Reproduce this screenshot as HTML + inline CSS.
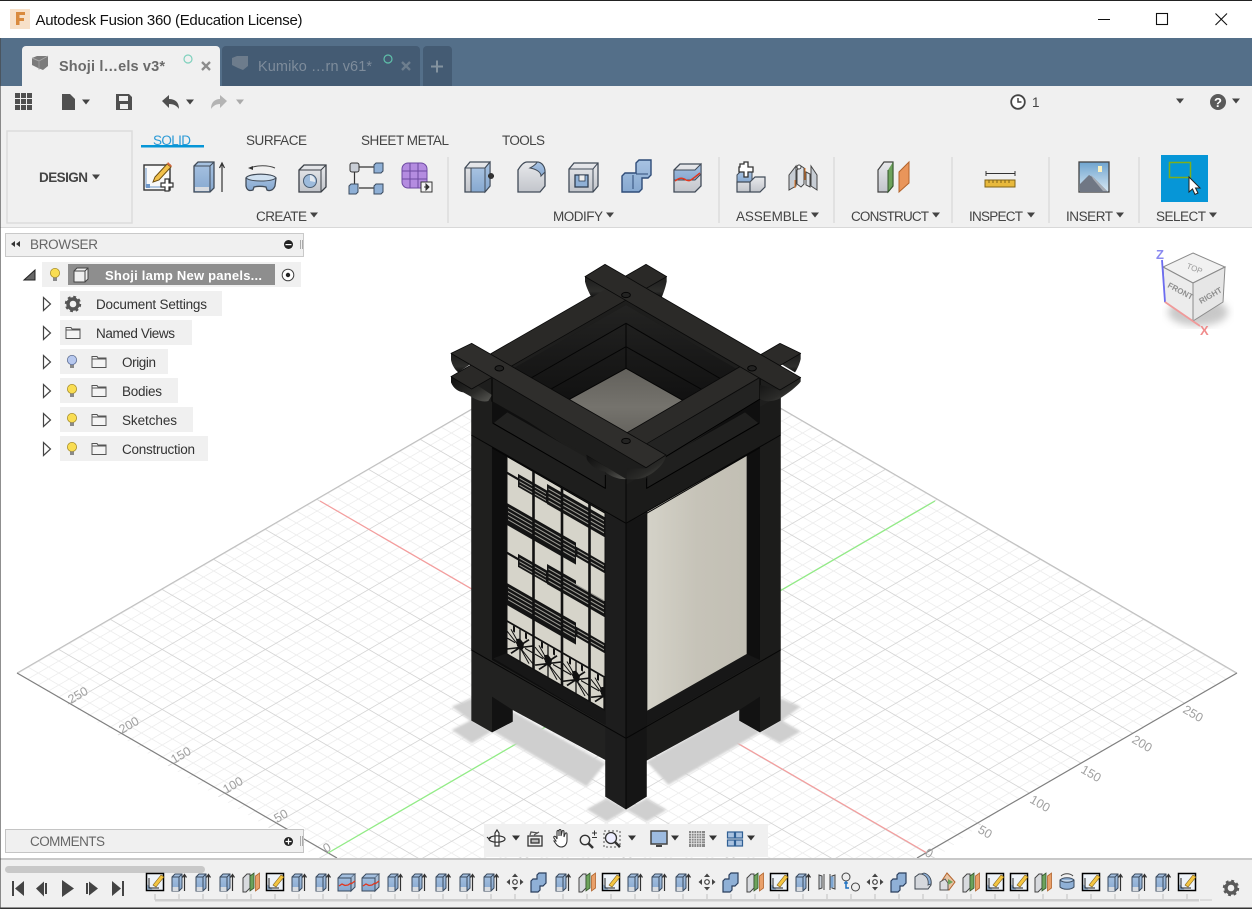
<!DOCTYPE html>
<html><head><meta charset="utf-8"><title>Autodesk Fusion 360</title>
<style>
html,body{margin:0;padding:0;width:1252px;height:909px;overflow:hidden;background:#fff}
svg{display:block;position:absolute;left:0;top:0;overflow:hidden}
text{font-family:"Liberation Sans",Arial,sans-serif}
</style></head><body>
<svg width="1252" height="909" viewBox="0 0 1252 909" xmlns="http://www.w3.org/2000/svg">
<defs>
<pattern id="grid" patternUnits="userSpaceOnUse" width="50" height="50" patternTransform="matrix(1.033,.6,-1.033,.6,627,679)">
<path d="M10 0V50M20 0V50M30 0V50M40 0V50M0 10H50M0 20H50M0 30H50M0 40H50" stroke="#eeeeee" stroke-width=".85" fill="none"/>
<path d="M0 0V50M0 0H50" stroke="#d0d0d0" stroke-width="1.400" fill="none"/>
</pattern>
<linearGradient id="paperR" x1="0" x2="1" y1="0" y2="0"><stop offset="0" stop-color="#d4d2c8"/><stop offset=".5" stop-color="#c6c3b8"/><stop offset="1" stop-color="#c2bfb4"/></linearGradient>
<linearGradient id="floor" x1="0" x2="0" y1="0" y2="1"><stop offset="0" stop-color="#62605b"/><stop offset=".6" stop-color="#75736d"/><stop offset="1" stop-color="#66645f"/></linearGradient>
<linearGradient id="end" x1="0" x2="0" y1="0" y2="1"><stop offset="0" stop-color="#1d1d1c"/><stop offset=".7" stop-color="#2e2e2c"/><stop offset="1" stop-color="#0f0f0f"/></linearGradient>
<linearGradient id="endL" x1="0" x2="1" y1="0" y2="1"><stop offset="0" stop-color="#0f0f0f"/><stop offset=".6" stop-color="#2a2a28"/><stop offset="1" stop-color="#5a5a56"/></linearGradient>
<linearGradient id="wallA" x1="0" x2="0" y1="0" y2="1"><stop offset="0" stop-color="#232322"/><stop offset="1" stop-color="#111"/></linearGradient>
<linearGradient id="blue" x1="0" x2="0" y1="0" y2="1"><stop offset="0" stop-color="#a8c3e2"/><stop offset="1" stop-color="#86a8d0"/></linearGradient>
<linearGradient id="grey" x1="0" x2="0" y1="0" y2="1"><stop offset="0" stop-color="#e8e9ec"/><stop offset="1" stop-color="#c2c5cb"/></linearGradient>
<linearGradient id="sky" x1="0" x2="0" y1="0" y2="1"><stop offset="0" stop-color="#6fa4cf"/><stop offset="1" stop-color="#d8e8f2"/></linearGradient>
<filter id="blur"><feGaussianBlur stdDeviation="4"/></filter>
<filter id="soft" x="-10%" y="-10%" width="120%" height="120%"><feGaussianBlur stdDeviation="4"/></filter>

<g id="tExt"><path d="M-7 -5l3 -3h7v14l-3 3h-7z" fill="url(#blue)" stroke="#3a4a5e"/><path d="M-7 -5h7v14M0 -5l3 -3" stroke="#3a4a5e" fill="none"/><path d="M-6.500 5h6v4h-6z" fill="#d7dbe0"/><path d="M5.500 9V-7M3.500 -4.500l2 -3l2 3" stroke="#333" fill="none" stroke-width="1.200"/></g>
<g id="tSk"><rect x="-8.500" y="-8.500" width="17" height="17" fill="#eef3f8" stroke="#000" stroke-width="1.500"/><path d="M-7.500 7.500v-5l5 5z" fill="#8fb4dc"/><path d="M-6 -4V6H4" stroke="#222" fill="none"/><path d="M-2 3L6 -7l3 2L1 5z" fill="#f4c542" stroke="#7a5a10" stroke-width=".6"/></g>
<g id="tPl"><path d="M-8 -4l4 -4h3v14l-4 4h-3z" fill="#d8dade" stroke="#444"/><path d="M-1 -6l4 -3v15l-4 3z" fill="#6da35c" stroke="#34562c" stroke-width=".8"/><path d="M4.500 -6l4 -3v15l-4 3z" fill="#e9a06a" stroke="#b3642c" stroke-width=".8"/></g>
<g id="tSp"><path d="M-9 -4l4 -4h13l-4 4v13h-13z" fill="url(#blue)" stroke="#3a4a5e"/><path d="M4 -4v13l4 -4V-8" fill="#a9bed6" stroke="#3a4a5e"/><path d="M-9 -4H4" stroke="#3a4a5e"/><path d="M-8 4l3 -2l3 1.500l3 -.5l3 -2" stroke="#e2371f" fill="none" stroke-width="1.300"/><path d="M4 2l4 -3" stroke="#e2371f" fill="none" stroke-width="1.300"/></g>
<g id="tMv"><path d="M0 -8.500l-3 3.500h6zM0 8.500l-3 -3.500h6zM-8.500 0l3.500 -3v6zM8.500 0l-3.500 -3v6z" fill="#444"/><circle r="2.300" fill="#fff" stroke="#444" stroke-width="1.200"/></g>
<g id="tCb"><path d="M-7 -2l2 -2h4v-4l2 -2h7v10l-3 3h-3v4l-2 2h-7z" transform="translate(-1 1)" fill="#8fb0d6" stroke="#2b3f5e" stroke-width="1.200"/></g>
<g id="tFi"><path d="M-8 -5l4 -3h5c5 1 8 5 7 11l-3 4h-13z" fill="#d5d8dd" stroke="#3e4650"/><path d="M-2 -8c5 1 8 5 7 11l3 -1c1 -6 -3 -10 -7 -11z" fill="#8fb0d6" stroke="#3e4650" stroke-width=".8"/></g>
<g id="tDi"><path d="M0 -9l8 9l-6 8l-8 -8z" fill="#e7c3a4" stroke="#b4642c"/><path d="M-7 0l5 -3l3 4v7h-8z" fill="#dcdde0" stroke="#555"/><path d="M1 -3l5 3l-5 3z" fill="#6da35c"/></g>
<g id="tMi"><path d="M-8 -7l3 1v12l-3 1zM8 -7l-3 1v12l3 1z" fill="#c9d0d8" stroke="#444"/><path d="M-3 -8v16M3 -8v16" stroke="#444"/><path d="M3.500 -6l3 1v10l-3 1z" fill="#7ea7d3"/></g>
<g id="tJo"><circle cx="-5" cy="-5" r="4" fill="#eee" stroke="#444"/><circle cx="4.500" cy="5" r="4" fill="#eee" stroke="#444"/><path d="M-5 -1v7h3" stroke="#1b6fc0" fill="none" stroke-width="1.500"/><path d="M-7 1h4" stroke="#1b6fc0" stroke-width="1.300"/></g>
<g id="tRv"><path d="M-7 -2c3 -3 11 -3 14 0v7c-3 3 -11 3 -14 0z" fill="#8fb0d6" stroke="#3a4a5e"/><path d="M-7 -2c3 3 11 3 14 0" fill="#c3d5e9" stroke="#3a4a5e"/><path d="M-6 -6c3 -3 9 -3 12 0" stroke="#444" fill="none"/></g>

<path id="car" d="M-4 -2.500h8l-4 5z"/>
<g id="folder"><path d="M-7 -5.500h5l1 1.500h8v9.500h-14z M-7 -3h14" fill="#f4f4f4" stroke="#555" stroke-width="1"/></g>
<g id="bulb"><circle cy="-2" r="4.600" fill="#f9dd52" stroke="#a68d2a" stroke-width=".8"/><path d="M-2 2.500h4v3.500h-4z" fill="#8a8a8a"/></g>
<g id="arrow"><path d="M-3.500 -6.500v13l7 -6.500z" fill="#fff" stroke="#444" stroke-width="1.200"/></g>
<g id="star" fill="none" stroke="#111" stroke-width="1.300">
<path d="M13 165V197M0 174L26 192M26 174L0 192M4 170L13 181L22 170M4 194L13 183L22 194M0 181H8M18 181H26"/>
<path d="M7 165v6M19 165v6" stroke-width="2"/>
<path d="M9 177l4 -3l4 3l-1 6l-3 3l-3 -3z" fill="#111" stroke="none"/>
</g>
</defs>

<!-- canvas -->
<rect width="1252" height="909" fill="#fff"/>
<polygon points="17,673 627,319 1237,673 1002,809 936,858 318,858" fill="url(#grid)"/>
<path d="M17 673L627 319M627 319L1237 673" stroke="#c0c0c0" stroke-width="1" fill="none"/>
<path d="M17 673L337 858M1237 673L917 858" stroke="#7f7f7f" stroke-width="1.200" fill="none"/>
<path d="M320 501L927 853" stroke="#f59c9c" stroke-width="1.200"/>
<path d="M328 853L935 501" stroke="#92ec86" stroke-width="1.300"/>
<g font-size="12.500" fill="#a0a0a0">
<text transform="translate(71 704) rotate(-30)">250</text>
<text transform="translate(122 734) rotate(-30)">200</text>
<text transform="translate(174 764) rotate(-30)">150</text>
<text transform="translate(226 794) rotate(-30)">100</text>
<text transform="translate(277 823) rotate(-30)">50</text>
<text transform="translate(326 853) rotate(-30)">0</text>
<text transform="translate(1182 712) rotate(30)">250</text>
<text transform="translate(1131 742) rotate(30)">200</text>
<text transform="translate(1080 772) rotate(30)">150</text>
<text transform="translate(1029 802) rotate(30)">100</text>
<text transform="translate(977 832) rotate(30)">50</text>
<text transform="translate(924 855) rotate(30)">0</text>
</g>

<!-- lamp: coordinates = zoom space -->
<g transform="translate(430 255) scale(.33333)" stroke-linejoin="round">
<!-- shadows -->
<g fill="#cfcfcf" filter="url(#soft)">
<polygon points="65,1355 125,1330 190,1365 125,1400"/>
<polygon points="65,1425 125,1395 185,1430 125,1465"/>
<polygon points="250,1370 190,1430 470,1595 526,1525"/>
<polygon points="470,1663 530,1630 588,1663 650,1630 710,1665 650,1700 590,1665 530,1700"/>
<polygon points="1112,1355 1052,1330 990,1365 1052,1400"/>
<polygon points="1112,1430 1052,1395 990,1432 1050,1465"/>
<polygon points="650,1520 925,1365 990,1432 715,1590"/>
</g>
<!-- body -->
<polygon points="124,420 588,690 588,1663 526,1625 526,1515 248,1365 248,1400 186,1432 124,1397" fill="#222221"/>
<polygon points="1052,420 588,690 588,1663 650,1625 650,1517 928,1365 928,1397 990,1432 1052,1397" fill="#1c1c1b"/>
<polygon points="186,1325 248,1365 248,1400 186,1432" fill="#121212"/>
<polygon points="928,1365 990,1325 990,1432 928,1397" fill="#121212"/>
<polygon points="526,1515 526,1625 588,1663 588,1450 526,1410" fill="#1d1d1d"/>
<polygon points="650,1517 650,1625 588,1663 588,1450 650,1410" fill="#151515"/>
<!-- posts -->
<polygon points="526,775 588,805 588,1450 526,1410" fill="#1d1d1d"/>
<polygon points="650,775 588,805 588,1450 650,1410" fill="#151515"/>
<polygon points="124,540 186,578 186,1215 124,1185" fill="#1f1f1e"/>
<polygon points="1052,540 990,578 990,1215 1052,1185" fill="#1c1c1b"/>
<!-- recess left -->
<polygon points="186,578 526,775 526,1410 186,1215" fill="#0e0e0e"/>
<polygon points="190,1210 228,1195 526,1365 526,1410" fill="#171717"/>
<polygon points="650,775 990,578 990,1215 650,1410" fill="#0f0f0f"/>
<polygon points="650,1410 650,1367 950,1197 990,1215" fill="#171717"/>
<polygon points="652,770 950,600 950,1197 652,1367" fill="url(#paperR)"/>
<!-- kumiko panel -->
<g transform="translate(231 606) scale(3) matrix(1,.575,0,1,0,0)">
<rect x="0" y="0" width="98" height="197" fill="#d6d4ca"/>
<g fill="#141414">
<rect x="0" y="14.500" width="11" height="2.500"/>
<rect x="11" y="10.500" width="29" height="13"/>
<rect x="40" y="4" width="58" height="20"/>
<rect x="0" y="46" width="69" height="22"/>
<rect x="69" y="50" width="29" height="10"/>
<rect x="0" y="94.500" width="11" height="2.500"/>
<rect x="11" y="90.500" width="29" height="13"/>
<rect x="40" y="84" width="29" height="20"/>
<rect x="69" y="88" width="29" height="16"/>
<rect x="0" y="126" width="69" height="22"/>
<rect x="69" y="130" width="29" height="10"/>
</g>
<g stroke="#9a9992" stroke-width="1.200">
<path d="M12.500 14H39M12.500 17.500H39M12.500 21H39"/>
<path d="M41.500 8H97M41.500 12H97M41.500 16H97M41.500 20H97"/>
<path d="M1 50H68M1 54H68M1 58H68M1 62H68M70.500 53H97M70.500 57H97"/>
<path d="M12.500 94H39M12.500 97.500H39M12.500 101H39"/>
<path d="M41.500 88H97M41.500 92H97M41.500 96H97M41.500 100H97"/>
<path d="M1 130H68M1 134H68M1 138H68M1 142H68M70.500 133H97M70.500 137H97"/>
</g>
<use href="#star" x="0"/><use href="#star" x="28"/><use href="#star" x="56"/>
<svg x="84" y="160" width="14" height="38" viewBox="0 160 14 38"><use href="#star"/></svg>
<rect x="0" y="163" width="98" height="2" fill="#111"/>
<path d="M26.500 0V197M55 0V197M82.500 0V197" stroke="#111" stroke-width="2.600"/>
<path d="M0 0V197M98 0V197" stroke="#111" stroke-width="1"/>
<path d="M0 197H98" stroke="#111" stroke-width="1.500"/>
</g>
<!-- top of body -->
<polygon points="124,360 588,90 1052,360 1052,540 588,805 124,540" fill="#1e1e1d"/>
<polygon points="588,690 1052,420 1052,540 588,805" fill="#1b1b1a"/>
<polygon points="186,430 186,505 526,700 526,650" fill="#0f0f0f"/>
<polygon points="190,505 232,472 526,640 526,700" fill="#222221"/>
<polygon points="990,430 990,505 650,700 650,650" fill="#0f0f0f"/>
<polygon points="986,505 945,472 650,640 650,700" fill="#20201f"/>
<path d="M190 505L526 700V660M986 505L650 700V660" stroke="#000" stroke-width="3" fill="none"/>
<path d="M124 540L588 805L1052 540M588 640V1450M124 1185L588 1450L1052 1185M588 1450V1663M186 578L526 775M990 578L650 775" stroke="#060606" stroke-width="3" fill="none"/>
<!-- inner well -->
<polygon points="250,340 588,150 925,345 588,535" fill="#151514"/>
<polygon points="250,340 588,150 588,340 415,435" fill="url(#wallA)"/>
<polygon points="588,150 925,345 760,437 588,340" fill="url(#wallA)"/>
<polygon points="588,340 760,437 590,535 415,435" fill="url(#floor)"/>
<path d="M298 372L588 205V340L415 435M358 405L588 275M878 375L588 205M818 405L588 275M588 340L760 437" stroke="#050505" stroke-width="3" fill="none"/>
<!-- lower bars B, D undercuts -->
<path d="M710 65V80C706 100 700 115 695 128L650 100Z" fill="url(#end)"/>
<path d="M1112 295V312C1108 330 1100 345 1095 352L1050 325Z" fill="url(#end)"/>
<path d="M63 365V382C70 400 85 410 100 412C125 425 150 445 175 438L186 420L125 380Z" fill="url(#endL)"/>
<path d="M470 600V612C478 630 500 645 525 650C540 665 570 675 590 672L590 640L530 630Z" fill="url(#endL)"/>
<!-- B -->
<polygon points="648,28 710,65 125,402 63,365" fill="#2a2927"/>
<path d="M648 28L710 65L125 402L63 365Z" stroke="#0a0a0a" stroke-width="2.500" fill="none"/>
<!-- D -->
<polygon points="1050,265 1112,295 590,602 525,572" fill="#2c2b29"/>
<polygon points="525,572 590,602 590,640 530,635 470,600" fill="#2d2c2a"/>
<path d="M1050 265L1112 295L590 602M1050 265L525 572L470 600L530 635L590 602" stroke="#0a0a0a" stroke-width="2.500" fill="none"/>
<!-- C side -->
<polygon points="186,367 650,638 650,670 588,672 470,600 186,438" fill="#1e1e1d"/>
<path d="M186 370V440" stroke="#000" stroke-width="3"/>
<polygon points="590,602 990,370 990,432 650,640" fill="#232322"/>
<path d="M990 370V432L650 640" stroke="#000" stroke-width="3" fill="none"/>
<!-- ends A, C -->
<path d="M465 65V80C470 100 478 115 485 128L530 100Z" fill="url(#end)"/>
<path d="M63 295V315C66 330 75 345 85 352L125 325Z" fill="url(#end)"/>
<path d="M1112 368V380C1100 395 1075 415 1050 430C1030 440 1005 442 990 432L990 390L1050 405Z" fill="url(#endL)"/>
<path d="M708 600C708 620 680 650 650 664C635 672 610 675 590 672L590 640L648 640Z" fill="url(#endL)"/>
<!-- A -->
<polygon points="525,28 1112,368 1050,405 465,65" fill="#2b2a28"/>
<path d="M525 28L1112 368L1050 405L465 65Z" stroke="#0a0a0a" stroke-width="2.500" fill="none"/>
<!-- C -->
<polygon points="125,265 708,600 648,638 63,295" fill="#2f2e2c"/>
<path d="M125 265L708 600L648 638L63 295Z" stroke="#0a0a0a" stroke-width="2.500" fill="none"/>
<g fill="#232322" stroke="#050505" stroke-width="3">
<ellipse cx="588" cy="120" rx="13" ry="8"/><ellipse cx="208" cy="340" rx="13" ry="8"/><ellipse cx="966" cy="340" rx="13" ry="8"/><ellipse cx="588" cy="558" rx="13" ry="8"/>
</g>
</g>

<!-- view cube -->
<ellipse cx="1198" cy="312" rx="30" ry="14" fill="#bbb" filter="url(#blur)" opacity=".8"/>
<polygon points="1193,253 1225,267 1193,283 1163,267" fill="#f1f1f1" stroke="#8b8b8b"/>
<polygon points="1163,267 1193,283 1193,321 1165,302" fill="#ececec" stroke="#8b8b8b"/>
<polygon points="1193,283 1225,267 1223,302 1193,321" fill="#e6e6e6" stroke="#8b8b8b"/>
<text font-size="8" fill="#999" transform="translate(1186 268) rotate(22)">TOP</text>
<text font-size="8" fill="#8e8e8e" font-weight="bold" transform="translate(1167 287) rotate(28)">FRONT</text>
<text font-size="8" fill="#8e8e8e" font-weight="bold" transform="translate(1201 304) rotate(-30)">RIGHT</text>
<path d="M1162 260L1165 302" stroke="#6c6cf0" stroke-width="1.800"/>
<path d="M1165 302L1200 326" stroke="#f09a9a" stroke-width="1.800"/>
<text x="1156" y="259" font-size="13" font-weight="bold" fill="#8a8af0">Z</text>
<text x="1200" y="335" font-size="13" font-weight="bold" fill="#f08c8c">X</text>

<!-- browser panel -->
<rect x="5.500" y="233.500" width="298" height="23" fill="#f0f0f0" stroke="#c9c9c9"/>
<path d="M11 244l4 -3v6zM16 244l4 -3v6z" fill="#333"/>
<text x="30" y="249" font-size="13.500" fill="#666" textLength="68">BROWSER</text>
<circle cx="288.500" cy="244.500" r="4.500" fill="#222"/><rect x="285.500" y="244" width="6" height="1.200" fill="#fff"/>
<path d="M300.500 240v9M302.500 240v9" stroke="#aaa"/>
<rect x="42" y="262" width="259" height="25" fill="#f0f0f0"/>
<rect x="68" y="264" width="207" height="21" fill="#8e8e8e"/>
<path d="M24 280l11 -10v10z" fill="#666" stroke="#222"/>
<use href="#bulb" x="55" y="275"/>
<path d="M74 271l3 -3h11v11l-3 3h-11z" fill="#eee" stroke="#444"/><path d="M85 271v11M74 271h11l3 -3" stroke="#444" fill="none"/>
<text x="105" y="280" font-size="13" font-weight="bold" fill="#fff" textLength="157">Shoji lamp New panels...</text>
<circle cx="288" cy="275" r="5.800" fill="#fff" stroke="#444"/><circle cx="288" cy="275" r="2.200" fill="#222"/>

<g fill="#f0f0f0">
<rect x="60" y="291" width="162" height="25"/><rect x="60" y="320" width="132" height="25"/><rect x="60" y="349" width="108" height="25"/><rect x="60" y="378" width="118" height="25"/><rect x="60" y="407" width="133" height="25"/><rect x="60" y="436" width="148" height="25"/>
</g>
<use href="#arrow" x="47" y="304"/><use href="#arrow" x="47" y="333"/><use href="#arrow" x="47" y="362"/><use href="#arrow" x="47" y="391"/><use href="#arrow" x="47" y="420"/><use href="#arrow" x="47" y="449"/>
<g transform="translate(73 304)"><circle r="5" fill="none" stroke="#555" stroke-width="3.400"/><circle r="7" fill="none" stroke="#555" stroke-width="2.400" stroke-dasharray="2.800 2.700"/></g>
<use href="#folder" x="73" y="333"/>
<use href="#bulb" x="72" y="362"/><circle cx="72" cy="360" r="4.600" fill="#b7c8ee" stroke="#6276a8" stroke-width=".8"/>
<use href="#bulb" x="72" y="391"/><use href="#bulb" x="72" y="420"/><use href="#bulb" x="72" y="449"/>
<use href="#folder" x="99" y="362"/><use href="#folder" x="99" y="391"/><use href="#folder" x="99" y="420"/><use href="#folder" x="99" y="449"/>
<g font-size="13.500" fill="#333">
<text x="96" y="309" textLength="111">Document Settings</text>
<text x="96" y="338" textLength="79">Named Views</text>
<text x="122" y="367" textLength="34">Origin</text>
<text x="122" y="396" textLength="40">Bodies</text>
<text x="122" y="425" textLength="55">Sketches</text>
<text x="122" y="454" textLength="73">Construction</text>
</g>

<!-- comments -->
<rect x="5.500" y="829.500" width="298" height="23" fill="#f0f0f0" stroke="#c4c4c4"/>
<text x="30" y="846" font-size="13.500" fill="#666" textLength="75">COMMENTS</text>
<circle cx="288.500" cy="841.500" r="4.500" fill="#222"/><path d="M285.500 841.500h6M288.500 838.500v6" stroke="#fff" stroke-width="1.200"/>
<path d="M300.500 836v10M302.500 836v10" stroke="#aaa"/>

<!-- nav bar -->
<rect x="484" y="824" width="284" height="33" fill="#f0f0f0"/>
<g transform="translate(497 839)" fill="none" stroke="#333" stroke-width="1.200"><path d="M-2 7V-6l2 -3l2 3V7z" fill="#fff"/><ellipse rx="8" ry="3.200"/><path d="M-8 0l-2 -2M-8 0l2 -1.500"/></g>
<use href="#car" x="516" y="838" fill="#333"/>
<g transform="translate(535 840)" stroke="#333" fill="none" stroke-width="1.300"><rect x="-7" y="-4" width="14" height="10"/><rect x="-4" y="-1" width="8" height="4" fill="#bbb"/><path d="M-5 -5l1 -3l7 1M-1 -5l5 -3" stroke="#555"/></g>
<path d="M556 841l-2 -3c-1 -2 1 -2 2 -1l1 2v-7c0 -2 2 -2 2 0v4l0 -5c0 -2 2 -2 2 0v5l1 -4c0 -2 2 -2 2 0v5l1 -3c1 -2 2 -1 2 0v6c0 4 -2 7 -6 7c-3 0 -5 -3 -7 -6z" fill="#fff" stroke="#333" stroke-width="1.100"/>
<g transform="translate(585 840)" stroke="#333" fill="none"><circle r="4.700" stroke-width="1.400"/><path d="M3.500 3.500l4.500 4.500" stroke-width="2.500"/><path d="M7 -7h5M9.500 -9.500v5M7 -2.500h5" stroke-width="1"/></g>
<g transform="translate(612 839)" stroke="#333" fill="none"><rect x="-8" y="-8" width="16" height="16" stroke-dasharray="2 2" stroke="#555"/><circle cx="-1" cy="-1" r="5.500" fill="#eef" stroke-width="1.300"/><path d="M3 3l5 5" stroke-width="2.500"/></g>
<use href="#car" x="632" y="838" fill="#333"/>
<g transform="translate(659 839)"><rect x="-8" y="-8" width="16" height="13" fill="#9dbbe0" stroke="#444" stroke-width="1.500"/><path d="M-3 7h6" stroke="#444" stroke-width="2"/></g>
<use href="#car" x="675" y="838" fill="#333"/>
<g transform="translate(697 839)"><rect x="-8" y="-8" width="16" height="16" fill="#888"/><path d="M-5.500 -8v16M-3 -8v16M-.500 -8v16M2 -8v16M4.500 -8v16M-8 -5.500h16M-8 -3h16M-8 -.500h16M-8 2h16M-8 4.500h16" stroke="#e4e4e4" stroke-width=".8"/></g>
<use href="#car" x="713" y="838" fill="#333"/>
<g transform="translate(735 839)" fill="#a9c2e0" stroke="#2f5f94" stroke-width="1.200"><rect x="-7.500" y="-7" width="7" height="6"/><rect x=".5" y="-7" width="7" height="6"/><rect x="-7.500" y="1" width="7" height="6"/><rect x=".5" y="1" width="7" height="6"/></g>
<use href="#car" x="751" y="838" fill="#333"/>

<!-- timeline -->
<rect x="0" y="858" width="1252" height="51" fill="#f0f0f0"/>
<rect x="0" y="858" width="1252" height="2" fill="#c8c8c8"/>
<rect x="5" y="866" width="200" height="7" rx="3.500" fill="#c8c8c8"/>
<rect x="155" y="899" width="1044" height="2.500" fill="#cfcfcf"/>
<rect x="1200" y="899" width="12" height="2" fill="#dcdcdc"/>
<path stroke="#cfcfcf" stroke-width="1.500" d="M155 894v6M179 894v6M203 894v6M227 894v6M251 894v6M275 894v6M299 894v6M323 894v6M347 894v6M371 894v6M395 894v6M419 894v6M443 894v6M467 894v6M491 894v6M515 894v6M539 894v6M563 894v6M587 894v6M611 894v6M635 894v6M659 894v6M683 894v6M707 894v6M731 894v6M755 894v6M779 894v6M803 894v6M827 894v6M851 894v6M875 894v6M899 894v6M923 894v6M947 894v6M971 894v6M995 894v6M1019 894v6M1043 894v6M1067 894v6M1091 894v6M1115 894v6M1139 894v6M1163 894v6M1187 894v6"/>
<g fill="#444">
<path d="M12 881h2v15h-2zM24 881v15l-9 -7.500z"/>
<path d="M36 888.500l8 -7v15zM45 883h2v11h-2z"/>
<path d="M62 880l12 8.500l-12 8.500z"/>
<path d="M86 883h2v11h-2zM89 881.500l9 7l-9 7z"/>
<path d="M112 881l9 7.500l-9 7.500zM122 881h2v15h-2z"/>
</g>
<g>
<use href="#tSk" x="155" y="882"/><use href="#tExt" x="179" y="882"/><use href="#tExt" x="203" y="882"/><use href="#tExt" x="227" y="882"/><use href="#tPl" x="251" y="882"/><use href="#tSk" x="275" y="882"/><use href="#tExt" x="299" y="882"/><use href="#tExt" x="323" y="882"/><use href="#tSp" x="347" y="882"/><use href="#tSp" x="371" y="882"/><use href="#tExt" x="395" y="882"/><use href="#tExt" x="419" y="882"/><use href="#tExt" x="443" y="882"/><use href="#tExt" x="467" y="882"/><use href="#tExt" x="491" y="882"/><use href="#tMv" x="515" y="882"/><use href="#tCb" x="539" y="882"/><use href="#tExt" x="563" y="882"/><use href="#tPl" x="587" y="882"/><use href="#tSk" x="611" y="882"/><use href="#tExt" x="635" y="882"/><use href="#tExt" x="659" y="882"/><use href="#tExt" x="683" y="882"/><use href="#tMv" x="707" y="882"/><use href="#tCb" x="731" y="882"/><use href="#tPl" x="755" y="882"/><use href="#tSk" x="779" y="882"/><use href="#tExt" x="803" y="882"/><use href="#tMi" x="827" y="882"/><use href="#tJo" x="851" y="882"/><use href="#tMv" x="875" y="882"/><use href="#tCb" x="899" y="882"/><use href="#tFi" x="923" y="882"/><use href="#tDi" x="947" y="882"/><use href="#tPl" x="971" y="882"/><use href="#tSk" x="995" y="882"/><use href="#tSk" x="1019" y="882"/><use href="#tPl" x="1043" y="882"/><use href="#tRv" x="1067" y="882"/><use href="#tSk" x="1091" y="882"/><use href="#tExt" x="1115" y="882"/><use href="#tExt" x="1139" y="882"/><use href="#tExt" x="1163" y="882"/><use href="#tSk" x="1187" y="882"/>
</g>
<g transform="translate(1231 888)"><circle r="5" fill="none" stroke="#5a5a5a" stroke-width="3.400"/><circle r="7" fill="none" stroke="#5a5a5a" stroke-width="2.400" stroke-dasharray="2.800 2.700"/></g>
<rect x="0" y="907.500" width="1252" height="1.500" fill="#333"/>

<!-- title bar -->
<rect x="0" y="0" width="1252" height="38" fill="#fff"/>
<rect x="0" y="0" width="1252" height="1" fill="#222"/>
<rect x="10" y="9" width="20" height="20" fill="#f7e0c8"/>
<path d="M16 12h9v3h-5.500v3h4.500v3h-4.500v4h-3.500z" fill="#d98a3e"/>
<text x="35.500" y="25" font-size="15" fill="#111" textLength="267">Autodesk Fusion 360 (Education License)</text>
<path d="M1098 19.500h12" stroke="#111"/>
<rect x="1156.500" y="13.500" width="11" height="11" fill="none" stroke="#111" stroke-width="1.100"/>
<path d="M1215.500 13.500l11.500 11.500M1227 13.500l-11.500 11.500" stroke="#111" stroke-width="1.100"/>

<!-- tab bar -->
<rect x="0" y="38" width="1252" height="48" fill="#546f89"/>
<path d="M22 86V50a4 4 0 0 1 4 -4H216a4 4 0 0 1 4 4V86z" fill="#f0f0f0"/>
<path d="M222 86V50a4 4 0 0 1 4 -4H416a4 4 0 0 1 4 4V86z" fill="#445b73"/>
<path d="M423 86V50a4 4 0 0 1 4 -4H448a4 4 0 0 1 4 4V86z" fill="#445b73"/>
<g transform="translate(40 64)"><path d="M-8 -6l5 -2h11v10l-5 4l-5 -2l-6 -3z" fill="#7b7b7b"/><path d="M-8 -6l7 3l9 -5" stroke="#a8a8a8" fill="none"/><path d="M-1 -3v8.500" stroke="#999"/></g>
<g transform="translate(240 64)" opacity=".75"><path d="M-8 -6l5 -2h11v10l-5 4l-5 -2l-6 -3z" fill="#7b8794"/></g>
<text x="59" y="71" font-size="14.500" font-weight="bold" fill="#6a6a6a" textLength="106">Shoji l…els v3*</text>
<text x="258" y="71" font-size="14.500" fill="#7e8c9b" textLength="114">Kumiko …rn v61*</text>
<circle cx="188" cy="59" r="4" fill="none" stroke="#7fd1bd" stroke-width="1.200"/>
<circle cx="388" cy="59" r="4" fill="none" stroke="#5fc0aa" stroke-width="1.200"/>
<path d="M202 62l8 8M210 62l-8 8" stroke="#8c8c8c" stroke-width="2.300"/>
<path d="M402 62l8 8M410 62l-8 8" stroke="#6d7e8e" stroke-width="2.300"/>
<path d="M431 66.500h12M437 60.500v12" stroke="#84939f" stroke-width="2"/>

<!-- toolbar -->
<rect x="0" y="86" width="1252" height="141" fill="#f0f0f0"/>
<rect x="0" y="227" width="1252" height="1" fill="#d8d8d8"/>
<rect x="0" y="38" width="1" height="871" fill="#444" opacity=".6"/>
<g fill="#505050">
<rect x="15" y="93" width="5" height="5"/><rect x="21" y="93" width="5" height="5"/><rect x="27" y="93" width="5" height="5"/>
<rect x="15" y="99" width="5" height="5"/><rect x="21" y="99" width="5" height="5"/><rect x="27" y="99" width="5" height="5"/>
<rect x="15" y="105" width="5" height="5"/><rect x="21" y="105" width="5" height="5"/><rect x="27" y="105" width="5" height="5"/>
<path d="M62 94h8l5 5v11h-13z"/>
<path d="M116 94h13l3 3v13h-16zM119 96v5h9v-5zM120 104v5h8v-5z" fill-rule="evenodd"/>
<path d="M162 101l7 -6v4c6 0 10 3 10 10c-2 -3 -5 -5 -10 -5v4z"/>
</g>
<path d="M227 101l-7 -6v4c-5 0 -9 3 -9 10c2 -3 5 -5 9 -5v4z" fill="#b4b4b4"/>
<use href="#car" x="86" y="102" fill="#444"/><use href="#car" x="190" y="102" fill="#444"/><use href="#car" x="240" y="102" fill="#aaa"/>
<g transform="translate(1018 102)"><circle r="6.800" fill="#fff" stroke="#444" stroke-width="1.800"/><path d="M0 -4v4h3.500" stroke="#444" fill="none" stroke-width="1.500"/></g>
<text x="1032" y="107" font-size="13.500" fill="#444">1</text>
<use href="#car" x="1180" y="101" fill="#444"/>
<circle cx="1218" cy="102" r="8" fill="#5a5a5a"/><text x="1218" y="107" font-size="13" font-weight="bold" fill="#fff" text-anchor="middle">?</text>
<use href="#car" x="1236" y="101" fill="#444"/>

<rect x="7" y="131" width="125" height="92" fill="#f0f0f0" stroke="#dcdcdc" stroke-width="1.500"/>
<text x="39" y="182" font-size="13.500" font-weight="bold" fill="#444" textLength="49">DESIGN</text>
<use href="#car" x="96" y="177" fill="#444"/>

<text x="153" y="145" font-size="13.500" fill="#2b9ad6" textLength="38">SOLID</text>
<rect x="141" y="145" width="63" height="2.500" fill="#0696d7"/>
<g font-size="13.500" fill="#444">
<text x="246" y="145" textLength="61">SURFACE</text>
<text x="361" y="145" textLength="88">SHEET METAL</text>
<text x="502" y="145" textLength="43">TOOLS</text>
<text x="256" y="221" textLength="51">CREATE</text>
<text x="553" y="221" textLength="50">MODIFY</text>
<text x="736" y="221" textLength="72">ASSEMBLE</text>
<text x="851" y="221" textLength="78">CONSTRUCT</text>
<text x="969" y="221" textLength="54">INSPECT</text>
<text x="1066" y="221" textLength="47">INSERT</text>
<text x="1156" y="221" textLength="50">SELECT</text>
</g>
<g fill="#444"><use href="#car" x="314" y="215"/><use href="#car" x="610" y="215"/><use href="#car" x="815" y="215"/><use href="#car" x="936" y="215"/><use href="#car" x="1031" y="215"/><use href="#car" x="1120" y="215"/><use href="#car" x="1213" y="215"/></g>
<path d="M448 157V223M719 157V223M834 157V223M952 157V223M1049 157V223M1139 157V223" stroke="#dcdcdc" stroke-width="1.500"/>

<!-- CREATE icons -->
<g>
<rect x="144" y="165" width="26" height="25" fill="#f8f8f8" stroke="#333" stroke-width="1.400"/>
<path d="M146 188v-4h4v4z" fill="#6d96c8"/><path d="M146 168v19h18" stroke="#6d96c8" fill="none"/>
<path d="M153 182l2 -5l12 -13l4 3l-12 13z" fill="#f1c04a" stroke="#6b4d10"/><path d="M167 164l4 3l1 -1l-4 -4z" fill="#d6683d"/>
<path d="M161 183h4v-4h4v4h4v4h-4v4h-4v-4h-4z" fill="#fff" stroke="#333" stroke-width="1.200"/>
<path d="M194 166l4 -4h16v26l-4 4h-16z" fill="url(#blue)" stroke="#414b58" stroke-width="1.300"/>
<path d="M210 166v26M194 166h16l4 -4" stroke="#414b58" fill="none"/><path d="M195 187h14v4h-14z" fill="#d8dbe0"/>
<path d="M222 192V164M219.500 168l2.500 -5l2.500 5" stroke="#333" fill="none" stroke-width="1.200"/>
<path d="M246 178c3 -5 26 -5 30 0l-1 8c-2 5 -6 5 -8 4l-1 -3c-5 -1 -8 -1 -12 0l-1 3c-3 1 -6 1 -7 -4z" fill="url(#blue)" stroke="#414b58" stroke-width="1.300"/>
<path d="M246 178c5 4 25 4 30 0c-3 -5 -27 -5 -30 0z" fill="#cfe0f0" stroke="#414b58"/>
<path d="M250 168c7 -3 18 -3 25 0" stroke="#444" fill="none"/><path d="M248 168l5 -2v4z" fill="#333"/>
<path d="M299 170l5 -5h22v22l-5 5h-22z" fill="url(#grey)" stroke="#3a3f46" stroke-width="1.300"/><path d="M321 170v22M299 170h22l5 -5" stroke="#3a3f46" fill="none"/>
<circle cx="310" cy="181" r="6.500" fill="#9dbbdc" stroke="#4a5d73"/><path d="M310 175a6 6 0 0 1 5 7l-5 -1z" fill="#e2e8ef"/>
<rect x="350" y="163" width="9" height="9" rx="2" fill="#c9ced6" stroke="#333"/><path d="M359 167h15M354.500 172v13M359 188h15" stroke="#333" stroke-width="1.200"/>
<path d="M374 165l2 -2h7v8l-2 2h-7z" fill="#8fb0d6" stroke="#3a4a5e"/><path d="M349 186l2 -2h7v8l-2 2h-7z" fill="#8fb0d6" stroke="#3a4a5e"/><path d="M374 186l2 -2h7v8l-2 2h-7z" fill="#8fb0d6" stroke="#3a4a5e"/>
<rect x="402" y="163" width="25" height="25" rx="6" fill="#b48ce0" stroke="#6d4aa0"/><path d="M402 171h25M402 179h25M410 163v25M418 163v25" stroke="#6d4aa0" fill="none"/>
<rect x="421" y="182" width="11" height="10" fill="#f4f4f4" stroke="#333"/><path d="M424 187h3M426 184l3 3l-3 3z" fill="#333" stroke="#333"/>
</g>
<!-- MODIFY icons -->
<g>
<path d="M465 168l5 -6h20v24l-5 6h-20z" fill="url(#grey)" stroke="#414b58" stroke-width="1.300"/><path d="M471 168v24M465 168h20l5 -6" fill="none" stroke="#414b58"/><path d="M471 168h14v24h-14z" fill="url(#blue)" stroke="#414b58"/><path d="M485 168l5 -6v24l-5 6z" fill="url(#blue)" stroke="#414b58"/><circle cx="491" cy="176" r="3" fill="#333"/><path d="M488 176h6" stroke="#333" stroke-width="2"/>
<path d="M518 170c3 -5 6 -8 9 -8h10c5 0 8 5 8 10v14l-5 6h-22z" fill="url(#grey)" stroke="#414b58" stroke-width="1.300"/><path d="M530 168c4 -2 7 -5 7 -6c5 0 8 5 8 10l-4 4c0 -4 -5 -7 -11 -8z" fill="url(#blue)" stroke="#414b58"/>
<path d="M569 169l5 -6h24v23l-5 6h-24z" fill="url(#grey)" stroke="#414b58" stroke-width="1.300"/><path d="M593 169v23M569 169h24l5 -6" fill="none" stroke="#414b58"/><rect x="575" y="175" width="13" height="12" fill="#8fb0d6" stroke="#2f3e52" stroke-width="1.300"/><rect x="579" y="175" width="6" height="6" fill="#eee" stroke="#2f3e52" stroke-width=".8"/>
<path d="M636 163l3 -3h12v15l-3 3h-6v11l-3 3h-17v-16l3 -3h11z" fill="url(#blue)" stroke="#2f4c78" stroke-width="1.400"/><path d="M636 174h12M633 175v14" stroke="#2f4c78" fill="none"/>
<path d="M674 170l6 -6h21v22l-6 6h-21z" fill="url(#grey)" stroke="#414b58" stroke-width="1.300"/><path d="M674 170h21l6 -6v10l-6 6h-21z" fill="url(#blue)" stroke="#414b58"/><path d="M675 181c5 -4 8 -3 11 -1c4 2 6 -1 9 -3l5 -4" stroke="#e2371f" fill="none" stroke-width="1.500"/>
</g>
<!-- ASSEMBLE -->
<g>
<path d="M737 175l3 -3h12v10h-15z" fill="url(#blue)" stroke="#414b58"/><path d="M737 182h13v10h-13zM750 182l5 -5h10v10l-5 5h-10z" fill="url(#grey)" stroke="#414b58" stroke-width="1.200"/>
<path d="M740 164h4v-2h4v5h5v5h-5v5h-4v-5h-5v-5h1z" fill="#fff" stroke="#333" stroke-width="1.300"/>
<path d="M789 175l7 -9v20l-7 4zM817 175l-6 -9v20l6 4z" fill="#c7cdd4" stroke="#444"/><path d="M797 170l4 -4l3 2v16l-3 3l-4 -3zM806 172l4 2v13l-4 -2z" fill="#dfe3e8" stroke="#444"/><circle cx="799" cy="167" r="2" fill="#fff" stroke="#444"/><path d="M805 168v12M795 180v8" stroke="#e2751f"/>
</g>
<!-- CONSTRUCT -->
<g>
<path d="M878 170l6 -8h9v24l-5 6h-10z" fill="url(#grey)" stroke="#444" stroke-width="1.200"/>
<path d="M888 170v22l5 -6V162" fill="#6da35c" stroke="#34562c"/>
<path d="M899 172l10 -10v21l-10 9z" fill="#e9955a" stroke="#b3642c"/>
</g>
<!-- INSPECT -->
<g>
<path d="M986 171v5M1015 171v5M986 173.500h29" stroke="#333" fill="none"/>
<rect x="985" y="180" width="30" height="7" fill="#e8b93c" stroke="#7f6418"/><path d="M989 180v3M993 180v3M997 180v3M1001 180v3M1005 180v3M1009 180v3" stroke="#7f6418"/>
</g>
<!-- INSERT -->
<g>
<rect x="1079" y="162" width="30" height="30" fill="url(#sky)" stroke="#444" stroke-width="1.300"/>
<rect x="1098" y="166" width="4" height="6" fill="#fbf2c0"/>
<path d="M1080 192v-8l9 -9l5 3l14 14z" fill="#707784"/><path d="M1091 175l5 5l11 11h-4l-10 -12z" fill="#a6abb3"/>
</g>
<!-- SELECT -->
<rect x="1161" y="155" width="47" height="47" fill="#0696d7"/>
<rect x="1169.500" y="162.500" width="21" height="15" fill="none" stroke="#7fae1a" stroke-width="1.500"/>
<path d="M1189 177v15l3.500 -3l2.500 5.500l3 -1.500l-2.500 -5h4.500z" fill="#fff" stroke="#222"/>
</svg>
</body></html>
